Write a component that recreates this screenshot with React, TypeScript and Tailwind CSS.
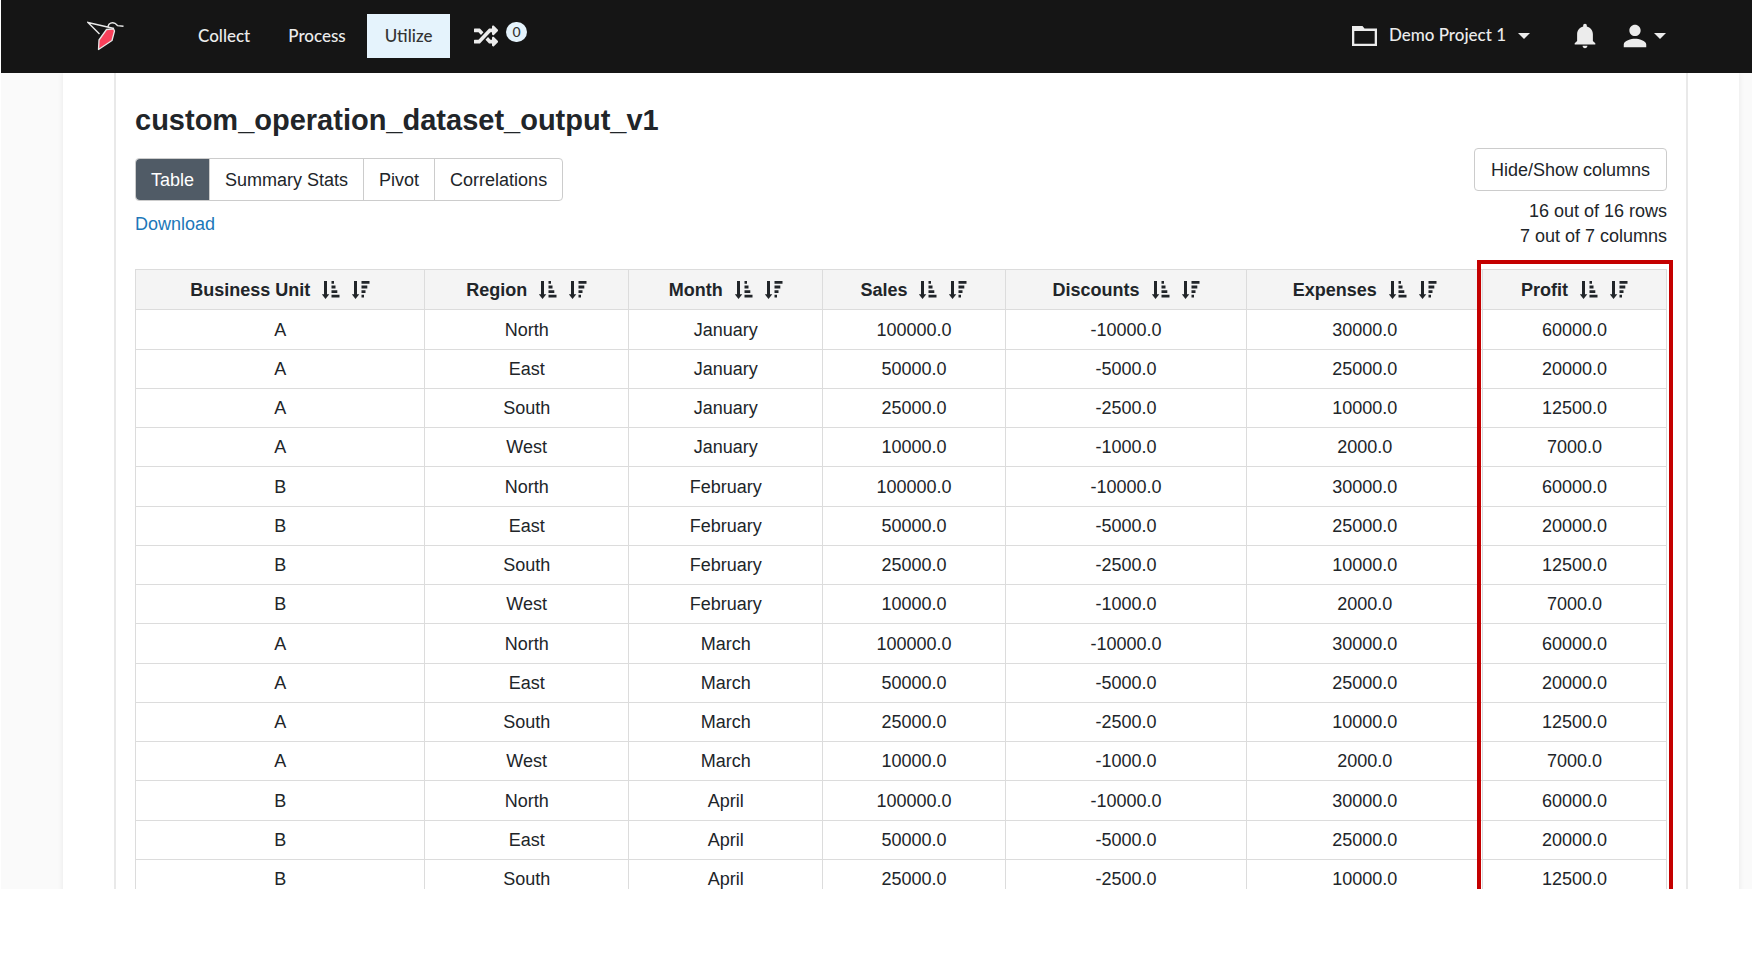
import { FaRandom } from "react-icons/fa";
import { IoMdNotifications, IoMdPerson } from "react-icons/io";

interface Column {
  label: string;
  width: string;
}

const VISIBLE_ROWS = 15;

const columns: Column[] = [
  { label: "Business Unit", width: "w-[18.9%]" },
  { label: "Region", width: "w-[13.3%]" },
  { label: "Month", width: "w-[12.7%]" },
  { label: "Sales", width: "w-[11.9%]" },
  { label: "Discounts", width: "w-[15.8%]" },
  { label: "Expenses", width: "w-[15.4%]" },
  { label: "Profit", width: "w-[12%]" },
];

const regions = [
  ["North", "100000.0", "-10000.0", "30000.0", "60000.0"],
  ["East", "50000.0", "-5000.0", "25000.0", "20000.0"],
  ["South", "25000.0", "-2500.0", "10000.0", "12500.0"],
  ["West", "10000.0", "-1000.0", "2000.0", "7000.0"],
];

const periods = [
  { unit: "A", month: "January" },
  { unit: "B", month: "February" },
  { unit: "A", month: "March" },
  { unit: "B", month: "April" },
];

const rows = periods.flatMap(({ unit, month }) =>
  regions.map(([region, ...values]) => [unit, region, month, ...values]),
);

const views = ["Table", "Summary Stats", "Pivot", "Correlations"];

function Logo() {
  return (
    <svg viewBox="0 0 37 30" className="h-[30px] w-[37px]" fill="none">
      <path d="M19.5 8.5 L26.5 7.8 L27.5 10 L25 19.5 L11.5 28.5 L12 19 Z" fill="#f8405a" stroke="#e8e8e8" strokeWidth="1.3" strokeLinejoin="round" />
      <path d="M12.5 13 L1 1.5 L27 7.5 M20.5 6.5 L22 3.2 Q24.5 1 28 2.3 L30.5 4.6 L36.5 5.2" stroke="#e8e8e8" strokeWidth="1.4" />
    </svg>
  );
}

function FolderIcon() {
  return (
    <svg viewBox="0 0 25 20" className="h-5 w-[25px]" fill="currentColor">
      <path fillRule="evenodd" d="M0 0h10.5l2 2.5H25V20H0zM2.3 5v12.7h20.4V5z" />
    </svg>
  );
}

function Caret() {
  return (
    <svg viewBox="0 0 12 6" className="h-1.5 w-3" fill="currentColor">
      <path d="M0 0h12L6 6z" />
    </svg>
  );
}

function SortIcon({ ascending }: { ascending: boolean }) {
  return (
    <svg viewBox="0 0 18 18" className="size-[18px]" fill="currentColor">
      <path d="M2 0h3v13.2h2.3L3.5 18-.3 13.2H2z" />
      {ascending ? (
        <path d="M9.5 0h2.5v2.8H9.5zM9.5 4.6h4v2.8h-4zM9.5 9.2h5.8V12H9.5zM9.5 13.8h8v2.8h-8z" />
      ) : (
        <path d="M9.5 0h8v2.8h-8zM9.5 4.6h5.8v2.8H9.5zM9.5 9.2h4V12h-4zM9.5 13.8h2.5v2.8H9.5z" />
      )}
    </svg>
  );
}

function Header() {
  return (
    <header className="flex h-[73px] shrink-0 items-center justify-between bg-[#151515] px-[86px] pb-0.5 font-['Lato',sans-serif] text-[17px] font-medium text-[#ececec]">
      <nav className="flex items-center gap-1">
        <a href="#home" aria-label="Home" className="mr-[53px]">
          <Logo />
        </a>
        <a href="#collect" className="px-[17px] py-2 leading-7">
          Collect
        </a>
        <a href="#process" className="px-[17px] py-2 leading-7">
          Process
        </a>
        <a href="#utilize" className="bg-[#e5f3fc] px-[18px] py-2 leading-7 text-[#333]">
          Utilize
        </a>
        <a href="#jobs" aria-label="Jobs" className="ml-5 flex items-center gap-2">
          <FaRandom className="size-6" />
          <span className="mb-2 rounded-full bg-[#e5f3fc] px-1.5 text-sm text-[#333]">0</span>
        </a>
      </nav>
      <div className="flex items-center">
        <button type="button" className="flex items-center">
          <FolderIcon />
          <span className="mr-3 ml-3">Demo Project 1</span>
          <Caret />
        </button>
        <button type="button" aria-label="Notifications" className="ml-10">
          <IoMdNotifications className="size-[30px]" />
        </button>
        <button type="button" aria-label="Account" className="ml-5 flex items-center gap-1">
          <IoMdPerson className="size-[30px]" />
          <Caret />
        </button>
      </div>
    </header>
  );
}

function DataTable() {
  return (
    <table className="w-full table-fixed border-collapse text-center">
      <thead>
        <tr className="h-10 bg-[#f4f4f4]">
          {columns.map((column) => (
            <th key={column.label} className={`${column.width} border border-[#dcdcdc] font-bold`}>
              <div className="flex items-center justify-center gap-3">
                {column.label}
                <button type="button" aria-label={`Sort ${column.label} ascending`}>
                  <SortIcon ascending />
                </button>
                <button type="button" aria-label={`Sort ${column.label} descending`}>
                  <SortIcon ascending={false} />
                </button>
              </div>
            </th>
          ))}
        </tr>
      </thead>
      <tbody>
        {rows.slice(0, VISIBLE_ROWS).map((row) => (
          <tr key={`${row[1]}-${row[2]}`} className="h-[39px] nth-[4n+1]:h-10">
            {row.map((value, index) => (
              <td key={columns[index].label} className="border border-[#dcdcdc]">
                {value}
              </td>
            ))}
          </tr>
        ))}
      </tbody>
    </table>
  );
}

export default function App() {
  return (
    <div className="flex h-screen flex-col bg-white pb-[91px] pl-px font-['Liberation_Sans',Arial,sans-serif] text-lg text-[#212529]">
      <Header />
      <div className="min-h-0 flex-1 overflow-hidden bg-[#fafafa] pr-[13px] pl-[62px]">
        <div className="bg-white px-[51px] shadow-[0_0_6px_rgba(0,0,0,0.08)]">
          <main className="border-x-2 border-[#e9e9e9] px-[19px] pt-6">
            <h1 className="text-[29px] leading-[46px] font-semibold">custom_operation_dataset_output_v1</h1>
            <div className="flex justify-between">
              <div className="pt-[15px]">
                <div className="flex rounded border border-[#ccc]">
                  {views.map((view) => (
                    <button
                      key={view}
                      type="button"
                      className="h-[41px] border-l border-[#ccc] px-[15px] first:rounded-l first:border-l-0 first:bg-[#505b66] first:text-white"
                    >
                      {view}
                    </button>
                  ))}
                </div>
                <a href="#download" className="mt-[9px] block text-[#2077b9]">
                  Download
                </a>
              </div>
              <div className="pt-[5px] text-right">
                <button type="button" className="mb-2 h-[43px] rounded border border-[#ccc] px-4">
                  Hide/Show columns
                </button>
                <p className="leading-[25px]">16 out of 16 rows</p>
                <p className="leading-[25px]">7 out of 7 columns</p>
              </div>
            </div>
            <div className="relative mt-5">
              <DataTable />
              <div className="pointer-events-none absolute -top-[9px] -right-[6px] bottom-0 w-[12.8%] border-4 border-b-0 border-[#c40000]" />
            </div>
          </main>
        </div>
      </div>
    </div>
  );
}
